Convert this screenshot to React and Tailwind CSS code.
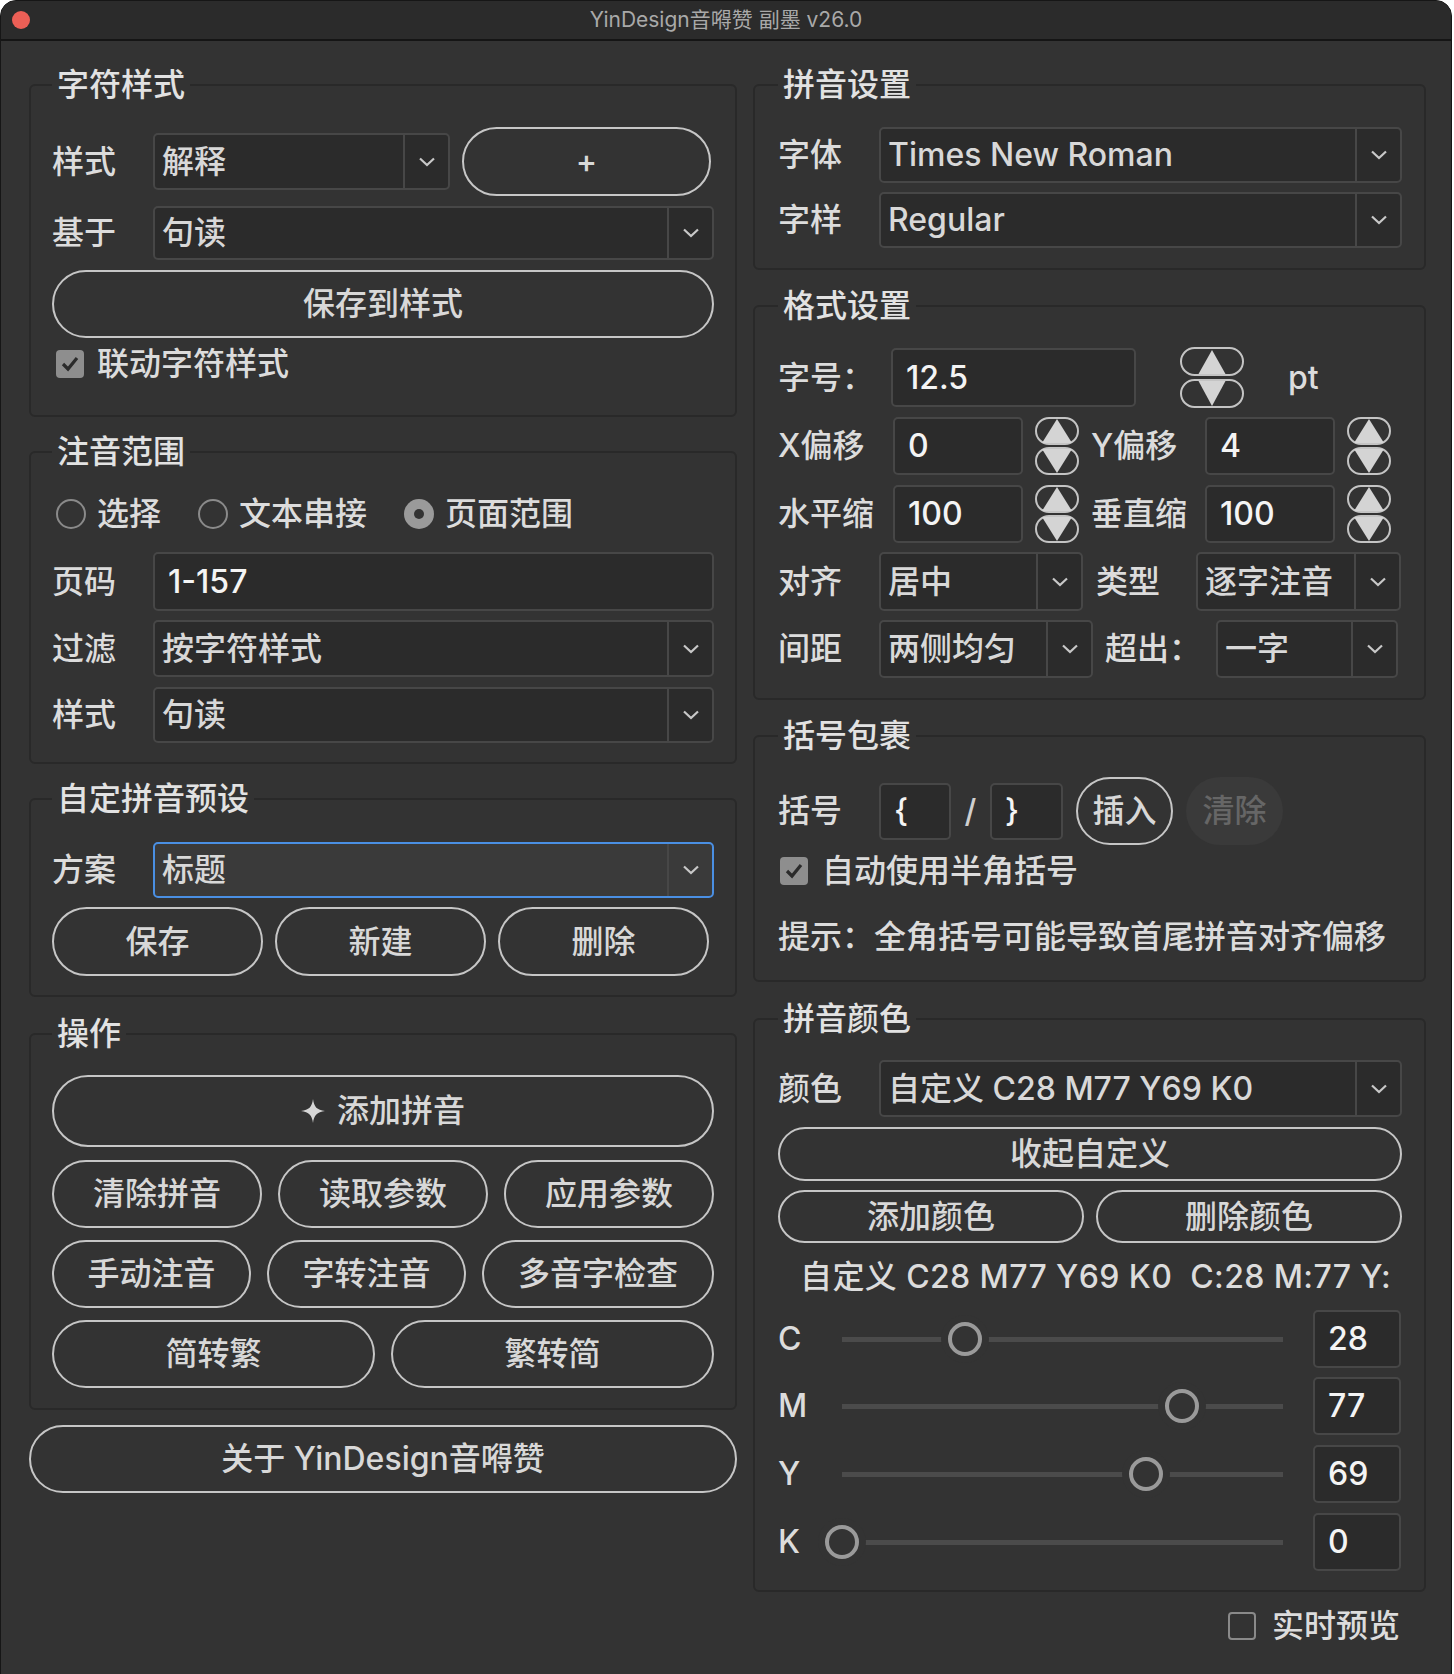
import React from "react";

const font = "font-['Inter','Noto_Sans_CJK_SC',sans-serif] font-medium";

function Chevron() {
  return (
    <svg width="18" height="10" viewBox="0 0 18 10">
      <polyline points="2,1.5 9,8 16,1.5" fill="none" stroke="#c8c8c8" strokeWidth="2.2" />
    </svg>
  );
}

function Select({ value, className = "", focused = false }) {
  return (
    <div
      className={`flex shrink-0 items-stretch rounded-[5px] border-2 ${
        focused ? "border-[#4a8fe3] bg-[#3a3a3a]" : "border-[#474747] bg-[#2b2b2b]"
      } ${className}`}
    >
      <div className="flex min-w-0 flex-1 items-center overflow-hidden whitespace-nowrap pl-[7px] text-[32px] text-[#d8d8d8]">
        {value}
      </div>
      <div className="flex w-[45px] shrink-0 items-center justify-center border-l-2 border-[#474747]">
        <Chevron />
      </div>
    </div>
  );
}

function Field({ value, className = "" }) {
  return (
    <div
      className={`flex shrink-0 items-center rounded-[5px] border-2 border-[#474747] bg-[#2b2b2b] pl-[13px] text-[32px] text-[#f4f4f4] ${className}`}
    >
      {value}
    </div>
  );
}

function Pill({ children, className = "" }) {
  return (
    <button
      type="button"
      className={`flex shrink-0 items-center justify-center whitespace-nowrap rounded-full border-2 border-[#c6c6c6] text-[32px] leading-[40px] text-[#d8d8d8] ${className}`}
    >
      {children}
    </button>
  );
}

function Label({ children, className = "" }) {
  return <div className={`shrink-0 whitespace-nowrap text-[32px] text-[#dcdcdc] ${className}`}>{children}</div>;
}

function Group({ title, className = "", children }) {
  return (
    <fieldset className={`min-w-0 rounded-[6px] border-2 border-[#292929] ${className}`}>
      <legend className="px-[5px] text-[32px] leading-[40px] text-[#e2e2e2]">{title}</legend>
      {children}
    </fieldset>
  );
}

function Check({ checked, className = "" }) {
  return checked ? (
    <div className={`flex h-[28px] w-[28px] shrink-0 items-center justify-center rounded-[4px] bg-[#8e8e8e] ${className}`}>
      <svg width="20" height="18" viewBox="0 0 20 18">
        <polyline points="3,9 8,14 17,3" fill="none" stroke="#2b2b2b" strokeWidth="3.2" />
      </svg>
    </div>
  ) : (
    <div className={`h-[28px] w-[28px] shrink-0 rounded-[4px] border-2 border-[#8a8a8a] ${className}`} />
  );
}

function Radio({ checked, label, className = "" }) {
  return (
    <div className={`flex items-center ${className}`}>
      {checked ? (
        <div className="flex h-[30px] w-[30px] items-center justify-center rounded-full bg-[#9a9a9a]">
          <div className="h-[10px] w-[10px] rounded-full bg-[#333333]" />
        </div>
      ) : (
        <div className="h-[30px] w-[30px] rounded-full border-2 border-[#8a8a8a]" />
      )}
      <span className="ml-[11px] text-[32px] text-[#dcdcdc]">{label}</span>
    </div>
  );
}

function Spinner({ big = false, className = "" }) {
  if (big) {
    return (
      <svg width="64" height="62" viewBox="0 0 64 62" className={`shrink-0 ${className}`}>
        <rect x="1" y="1" width="62" height="27" rx="13.5" fill="none" stroke="#c4c4c4" strokeWidth="2" />
        <rect x="1" y="33" width="62" height="27" rx="13.5" fill="none" stroke="#c4c4c4" strokeWidth="2" />
        <polygon points="32,3 18.5,27 45.5,27" fill="#d4d4d4" />
        <polygon points="18.5,34 45.5,34 32,59" fill="#d4d4d4" />
      </svg>
    );
  }
  return (
    <svg width="44" height="58" viewBox="0 0 44 58" className={`shrink-0 ${className}`}>
      <rect x="1" y="1" width="42" height="26" rx="13" fill="none" stroke="#c4c4c4" strokeWidth="2" />
      <rect x="1" y="31" width="42" height="26" rx="13" fill="none" stroke="#c4c4c4" strokeWidth="2" />
      <polygon points="22,2 7,26 37,26" fill="#d4d4d4" />
      <polygon points="7,32 37,32 22,56" fill="#d4d4d4" />
    </svg>
  );
}

function Star() {
  return (
    <svg width="24" height="24" viewBox="0 0 24 24" className="mr-[12px]">
      <path d="M12 0C13 8 16 11 24 12C16 13 13 16 12 24C11 16 8 13 0 12C8 11 11 8 12 0Z" fill="#d6d6d6" />
    </svg>
  );
}

function SliderRow({ label, value, className = "" }) {
  return (
    <div className={`flex h-[58px] items-center ${className}`}>
      <Label className="w-[64px]">{label}</Label>
      <div className="relative h-[5px] w-[441px] shrink-0 bg-[#4b4b4b]">
        <div
          className="absolute top-1/2 h-[34px] w-[34px] -translate-x-1/2 -translate-y-1/2 rounded-full border-4 border-[#9a9a9a] bg-[#333333] shadow-[0_0_0_7px_#333333]"
          style={{ left: `${value}%` }}
        />
      </div>
      <Field value={value} className="ml-[30px] h-[58px] w-[88px]" />
    </div>
  );
}

export default function App() {
  return (
    <div className={`h-[1674px] w-[1454px] overflow-hidden bg-white ${font}`}>
      <div className="h-[1680px] w-[1452px] overflow-hidden rounded-t-[16px] border border-[#161616] bg-[#333333]">
        {/* title bar */}
        <div className="grid h-[40px] grid-cols-[1fr_auto_1fr] items-center border-b-2 border-[#151515] bg-[#2b2b2b]">
          <div className="flex items-center">
            <div className="ml-[11px] h-[18px] w-[18px] rounded-full bg-[#ec5f56]" />
          </div>
          <div className="text-[21px] font-normal text-[#a9a9a9]">YinDesign音嘚赞 副墨 v26.0</div>
          <div />
        </div>

        <div className="flex gap-[16px] pl-[28px]">
          {/* left column */}
          <div className="flex w-[708px] flex-col">
            <Group title="字符样式" className="mt-[24px] px-[21px] pb-[31px] pt-[22px]">
              <div className="flex h-[69px] items-center">
                <Label className="w-[101px]">样式</Label>
                <Select value="解释" className="h-[57px] w-[297px]" />
                <Pill className="ml-[12px] h-[69px] w-[249px]">+</Pill>
              </div>
              <div className="mt-[10px] flex h-[54px] items-center">
                <Label className="w-[101px]">基于</Label>
                <Select value="句读" className="h-[54px] flex-1" />
              </div>
              <Pill className="mt-[10px] h-[68px] w-full">保存到样式</Pill>
              <div className="mt-[6px] flex h-[40px] items-center">
                <Check checked className="ml-[4px]" />
                <span className="ml-[13px] text-[32px] text-[#dcdcdc]">联动字符样式</span>
              </div>
            </Group>

            <Group title="注音范围" className="mt-[15px] px-[21px] pb-[19px] pt-[22px]">
              <div className="flex h-[40px] items-center gap-[37px] pl-[4px]">
                <Radio label="选择" />
                <Radio label="文本串接" />
                <Radio label="页面范围" checked />
              </div>
              <div className="mt-[18px] flex h-[59px] items-center">
                <Label className="w-[101px]">页码</Label>
                <Field value="1-157" className="h-[59px] flex-1" />
              </div>
              <div className="mt-[9px] flex h-[57px] items-center">
                <Label className="w-[101px]">过滤</Label>
                <Select value="按字符样式" className="h-[57px] flex-1" />
              </div>
              <div className="mt-[10px] flex h-[56px] items-center">
                <Label className="w-[101px]">样式</Label>
                <Select value="句读" className="h-[56px] flex-1" />
              </div>
            </Group>

            <Group title="自定拼音预设" className="mt-[15px] px-[21px] pb-[19px] pt-[23px]">
              <div className="flex h-[56px] items-center">
                <Label className="w-[101px]">方案</Label>
                <Select value="标题" focused className="h-[56px] flex-1" />
              </div>
              <div className="mt-[9px] grid w-[657px] grid-cols-3 gap-[12px]">
                <Pill className="h-[69px]">保存</Pill>
                <Pill className="h-[69px]">新建</Pill>
                <Pill className="h-[69px]">删除</Pill>
              </div>
            </Group>

            <Group title="操作" className="mt-[17px] px-[21px] pb-[20px] pt-[21px]">
              <Pill className="h-[72px] w-full">
                <Star />
                添加拼音
              </Pill>
              <div className="mt-[13px] grid grid-cols-3 gap-[16px]">
                <Pill className="h-[68px]">清除拼音</Pill>
                <Pill className="h-[68px]">读取参数</Pill>
                <Pill className="h-[68px]">应用参数</Pill>
              </div>
              <div className="mt-[12px] grid grid-cols-[199px_199px_1fr] gap-[16px]">
                <Pill className="h-[68px]">手动注音</Pill>
                <Pill className="h-[68px]">字转注音</Pill>
                <Pill className="h-[68px]">多音字检查</Pill>
              </div>
              <div className="mt-[12px] grid grid-cols-2 gap-[16px]">
                <Pill className="h-[68px]">简转繁</Pill>
                <Pill className="h-[68px]">繁转简</Pill>
              </div>
            </Group>

            <Pill className="mt-[15px] h-[68px] w-full">关于 YinDesign音嘚赞</Pill>
          </div>

          {/* right column */}
          <div className="flex w-[673px] flex-col">
            <Group title="拼音设置" className="mt-[24px] pb-[20px] pl-[23px] pr-[22px] pt-[22px]">
              <div className="flex h-[56px] items-center">
                <Label className="w-[101px]">字体</Label>
                <Select value="Times New Roman" className="h-[56px] flex-1" />
              </div>
              <div className="mt-[9px] flex h-[56px] items-center">
                <Label className="w-[101px]">字样</Label>
                <Select value="Regular" className="h-[56px] flex-1" />
              </div>
            </Group>

            <Group title="格式设置" className="mt-[16px] pb-[20px] pl-[23px] pr-[22px] pt-[21px]">
              <div className="flex h-[61px] items-center">
                <Label className="w-[113px]">字号：</Label>
                <Field value="12.5" className="h-[59px] w-[245px]" />
                <Spinner big className="ml-[44px]" />
                <span className="ml-[44px] text-[32px] text-[#dcdcdc]">pt</span>
              </div>
              <div className="mt-[9px] flex h-[58px] items-center">
                <Label className="w-[115px]">X偏移</Label>
                <Field value="0" className="h-[58px] w-[130px]" />
                <Spinner className="ml-[12px]" />
                <Label className="ml-[12px] w-[114px]">Y偏移</Label>
                <Field value="4" className="h-[58px] w-[130px]" />
                <Spinner className="ml-[12px]" />
              </div>
              <div className="mt-[10px] flex h-[58px] items-center">
                <Label className="w-[115px]">水平缩</Label>
                <Field value="100" className="h-[58px] w-[130px]" />
                <Spinner className="ml-[12px]" />
                <Label className="ml-[12px] w-[114px]">垂直缩</Label>
                <Field value="100" className="h-[58px] w-[130px]" />
                <Spinner className="ml-[12px]" />
              </div>
              <div className="mt-[9px] flex h-[59px] items-center">
                <Label className="w-[101px]">对齐</Label>
                <Select value="居中" className="h-[59px] w-[204px]" />
                <Label className="ml-[13px] w-[100px]">类型</Label>
                <Select value="逐字注音" className="h-[59px] w-[205px]" />
              </div>
              <div className="mt-[9px] flex h-[58px] items-center">
                <Label className="w-[101px]">间距</Label>
                <Select value="两侧均匀" className="h-[58px] w-[214px]" />
                <Label className="ml-[12px] w-[111px]">超出：</Label>
                <Select value="一字" className="h-[58px] w-[182px]" />
              </div>
            </Group>

            <Group title="括号包裹" className="mt-[16px] pb-[23px] pl-[23px] pr-[22px] pt-[21px]">
              <div className="flex h-[68px] items-center">
                <Label className="w-[101px]">括号</Label>
                <Field value="{" className="h-[57px] w-[72px]" />
                <span className="w-[39px] text-center text-[32px] text-[#cfcfcf]">/</span>
                <Field value="}" className="h-[57px] w-[73px]" />
                <Pill className="ml-[13px] h-[68px] w-[97px]">插入</Pill>
                <button
                  type="button"
                  className="ml-[13px] flex h-[68px] w-[97px] items-center justify-center rounded-full bg-[#3a3a3a] text-[32px] leading-[40px] text-[#666666]"
                >
                  清除
                </button>
              </div>
              <div className="mt-[6px] flex h-[40px] items-center">
                <Check checked className="ml-[2px]" />
                <span className="ml-[14px] text-[32px] text-[#dcdcdc]">自动使用半角括号</span>
              </div>
              <div className="mt-[26px] flex h-[40px] items-center whitespace-nowrap text-[32px] text-[#dcdcdc]">
                提示：全角括号可能导致首尾拼音对齐偏移
              </div>
            </Group>

            <Group title="拼音颜色" className="mt-[17px] pb-[19px] pl-[23px] pr-[22px] pt-[21px]">
              <div className="flex h-[57px] items-center">
                <Label className="w-[101px]">颜色</Label>
                <Select value="自定义 C28 M77 Y69 K0" className="h-[57px] flex-1" />
              </div>
              <Pill className="mt-[10px] h-[54px] w-full">收起自定义</Pill>
              <div className="mt-[9px] grid grid-cols-2 gap-[12px]">
                <Pill className="h-[53px]">添加颜色</Pill>
                <Pill className="h-[53px]">删除颜色</Pill>
              </div>
              <div className="mt-[14px] flex h-[40px] items-center whitespace-pre pl-[22px] text-[32px] tracking-[0.4px] text-[#dcdcdc]">
                自定义 C28 M77 Y69 K0  C:28 M:77 Y:
              </div>
              <SliderRow label="C" value={28} className="mt-[13px]" />
              <SliderRow label="M" value={77} className="mt-[9px]" />
              <SliderRow label="Y" value={69} className="mt-[10px]" />
              <SliderRow label="K" value={0} className="mt-[10px]" />
            </Group>

            <div className="mt-[14px] flex h-[40px] items-center justify-end pr-[26px]">
              <Check />
              <span className="ml-[16px] text-[32px] text-[#dcdcdc]">实时预览</span>
            </div>
          </div>
        </div>
      </div>
    </div>
  );
}
